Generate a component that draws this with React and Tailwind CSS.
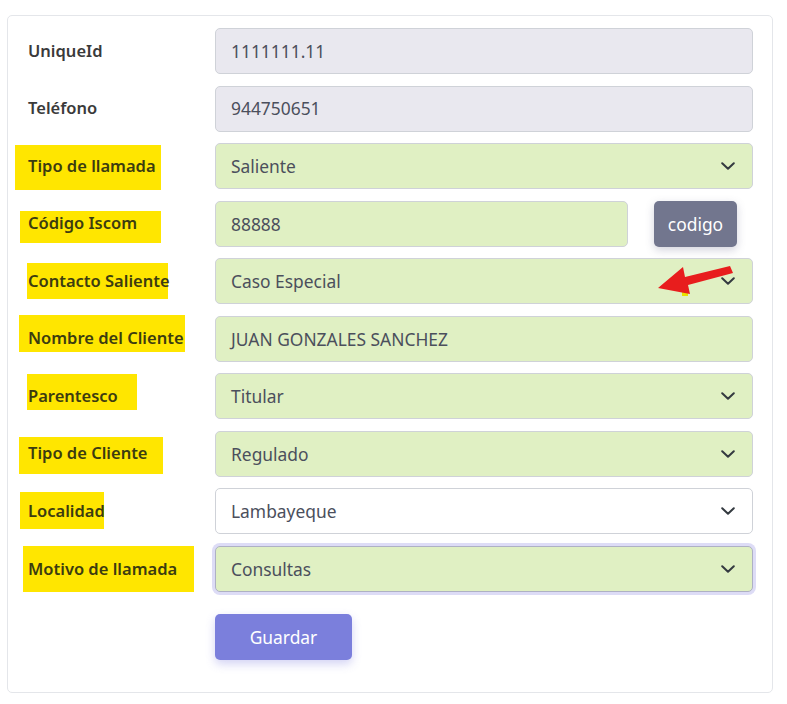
import React from 'react';

const labelFont = { fontFamily: '"Noto Sans", "Open Sans", sans-serif' };

const rows = [
  { label: 'UniqueId', value: '1111111.11', kind: 'readonly' },
  { label: 'Teléfono', value: '944750651', kind: 'readonly' },
  { label: 'Tipo de llamada', value: 'Saliente', kind: 'select', hl: 'left-[-13px] top-[2px] w-[146px] h-[45px]' },
  { label: 'Código Iscom', value: '88888', kind: 'code', hl: 'left-[-8px] top-[10px] w-[141px] h-[32px]' },
  { label: 'Contacto Saliente', value: 'Caso Especial', kind: 'select', hl: 'left-[-1px] top-[5px] w-[141px] h-[36px]' },
  { label: 'Nombre del Cliente', value: 'JUAN GONZALES SANCHEZ', kind: 'text', hl: 'left-[-9px] top-[-1px] w-[166px] h-[37px]' },
  { label: 'Parentesco', value: 'Titular', kind: 'select', hl: 'left-[-1px] top-[1px] w-[110px] h-[36px]' },
  { label: 'Tipo de Cliente', value: 'Regulado', kind: 'select', hl: 'left-[-9px] top-[6px] w-[144px] h-[37px]' },
  { label: 'Localidad', value: 'Lambayeque', kind: 'select-white', hl: 'left-[-8px] top-[4px] w-[84px] h-[37px]' },
  { label: 'Motivo de llamada', value: 'Consultas', kind: 'select-focus', hl: 'left-[-5px] top-[0px] w-[171px] h-[46px]' },
];

const Chevron = () => (
  <svg width="14" height="8" viewBox="0 0 14 8" className="absolute right-[17px] top-1/2 -translate-y-1/2" fill="none">
    <path d="M1.2 1.2 7 6.8 12.8 1.2" stroke="#343a40" strokeWidth="2" strokeLinecap="round" strokeLinejoin="round" />
  </svg>
);

const Field = ({ row }) => {
  const base = 'relative h-[46px] flex items-center pl-[15px] rounded-[5px] border text-[17.4px] text-[#4b4f5c]';
  if (row.kind === 'readonly') {
    return <div className={`${base} flex-1 bg-[#e9e8ef] border-[#cfd2d8]`}>{row.value}</div>;
  }
  if (row.kind === 'text') {
    return <div className={`${base} flex-1 bg-[#e0f0c3] border-[#cfd2d8]`}>{row.value}</div>;
  }
  if (row.kind === 'code') {
    return (
      <div className="flex-1 flex items-center">
        <div className={`${base} w-[413px] bg-[#e0f0c3] border-[#cfd2d8]`}>{row.value}</div>
        <button className="ml-[26px] w-[83px] h-[46px] rounded-[5px] bg-[#72768e] text-white text-[17.4px] shadow-[0_3px_8px_rgba(80,80,120,0.25)]">
          codigo
        </button>
      </div>
    );
  }
  if (row.kind === 'select-white') {
    return (
      <div className={`${base} flex-1 bg-white border-[#cfd2d8]`}>
        {row.value}
        <Chevron />
      </div>
    );
  }
  if (row.kind === 'select-focus') {
    return (
      <div className={`${base} flex-1 bg-[#e0f0c3] border-[#aeb1c4] ring-[3px] ring-[#dddcf6]`}>
        {row.value}
        <Chevron />
      </div>
    );
  }
  return (
    <div className={`${base} flex-1 bg-[#e0f0c3] border-[#cfd2d8]`}>
      {row.value}
      <Chevron />
    </div>
  );
};

const App = () => {
  return (
    <div className="relative w-[787px] h-[704px] bg-white" style={labelFont}>
      <div className="pt-[15px] pl-[7px]">
        <div className="w-[766px] h-[678px] border border-[#e4e6ea] rounded-[5px] pt-[12px] pl-[20px] pr-[19px]">
          <div className="flex flex-col gap-[11.55px]">
            {rows.map((row) => (
              <div key={row.label} className="flex items-center">
                <div className="relative w-[187px] h-[46px] flex items-center">
                  {row.hl && <span className={`absolute bg-[#ffe600] ${row.hl}`} />}
                  <span className={`relative text-[16.5px] font-semibold ${row.hl ? 'text-[#3c3c10]' : 'text-[#3a3a3a]'}`}>
                    {row.label}
                  </span>
                </div>
                <Field row={row} />
              </div>
            ))}
          </div>
          <div className="pl-[187px] mt-[22px]">
            <button className="w-[137px] h-[46px] rounded-[5px] bg-[#7b7fdc] text-white text-[17.4px] shadow-[0_4px_10px_rgba(110,110,220,0.3)]">
              Guardar
            </button>
          </div>
        </div>
      </div>

      {/* red annotation arrow */}
      <svg className="absolute left-[650px] top-[260px]" width="90" height="45" viewBox="0 0 90 45">
        <rect x="32" y="29" width="6" height="7" fill="#e8e000" />
        <polygon points="8,28 33,7 35,17 80,6 83,13 38,25 40,34" fill="#e81d1d" />
      </svg>
    </div>
  );
};

export default App;
